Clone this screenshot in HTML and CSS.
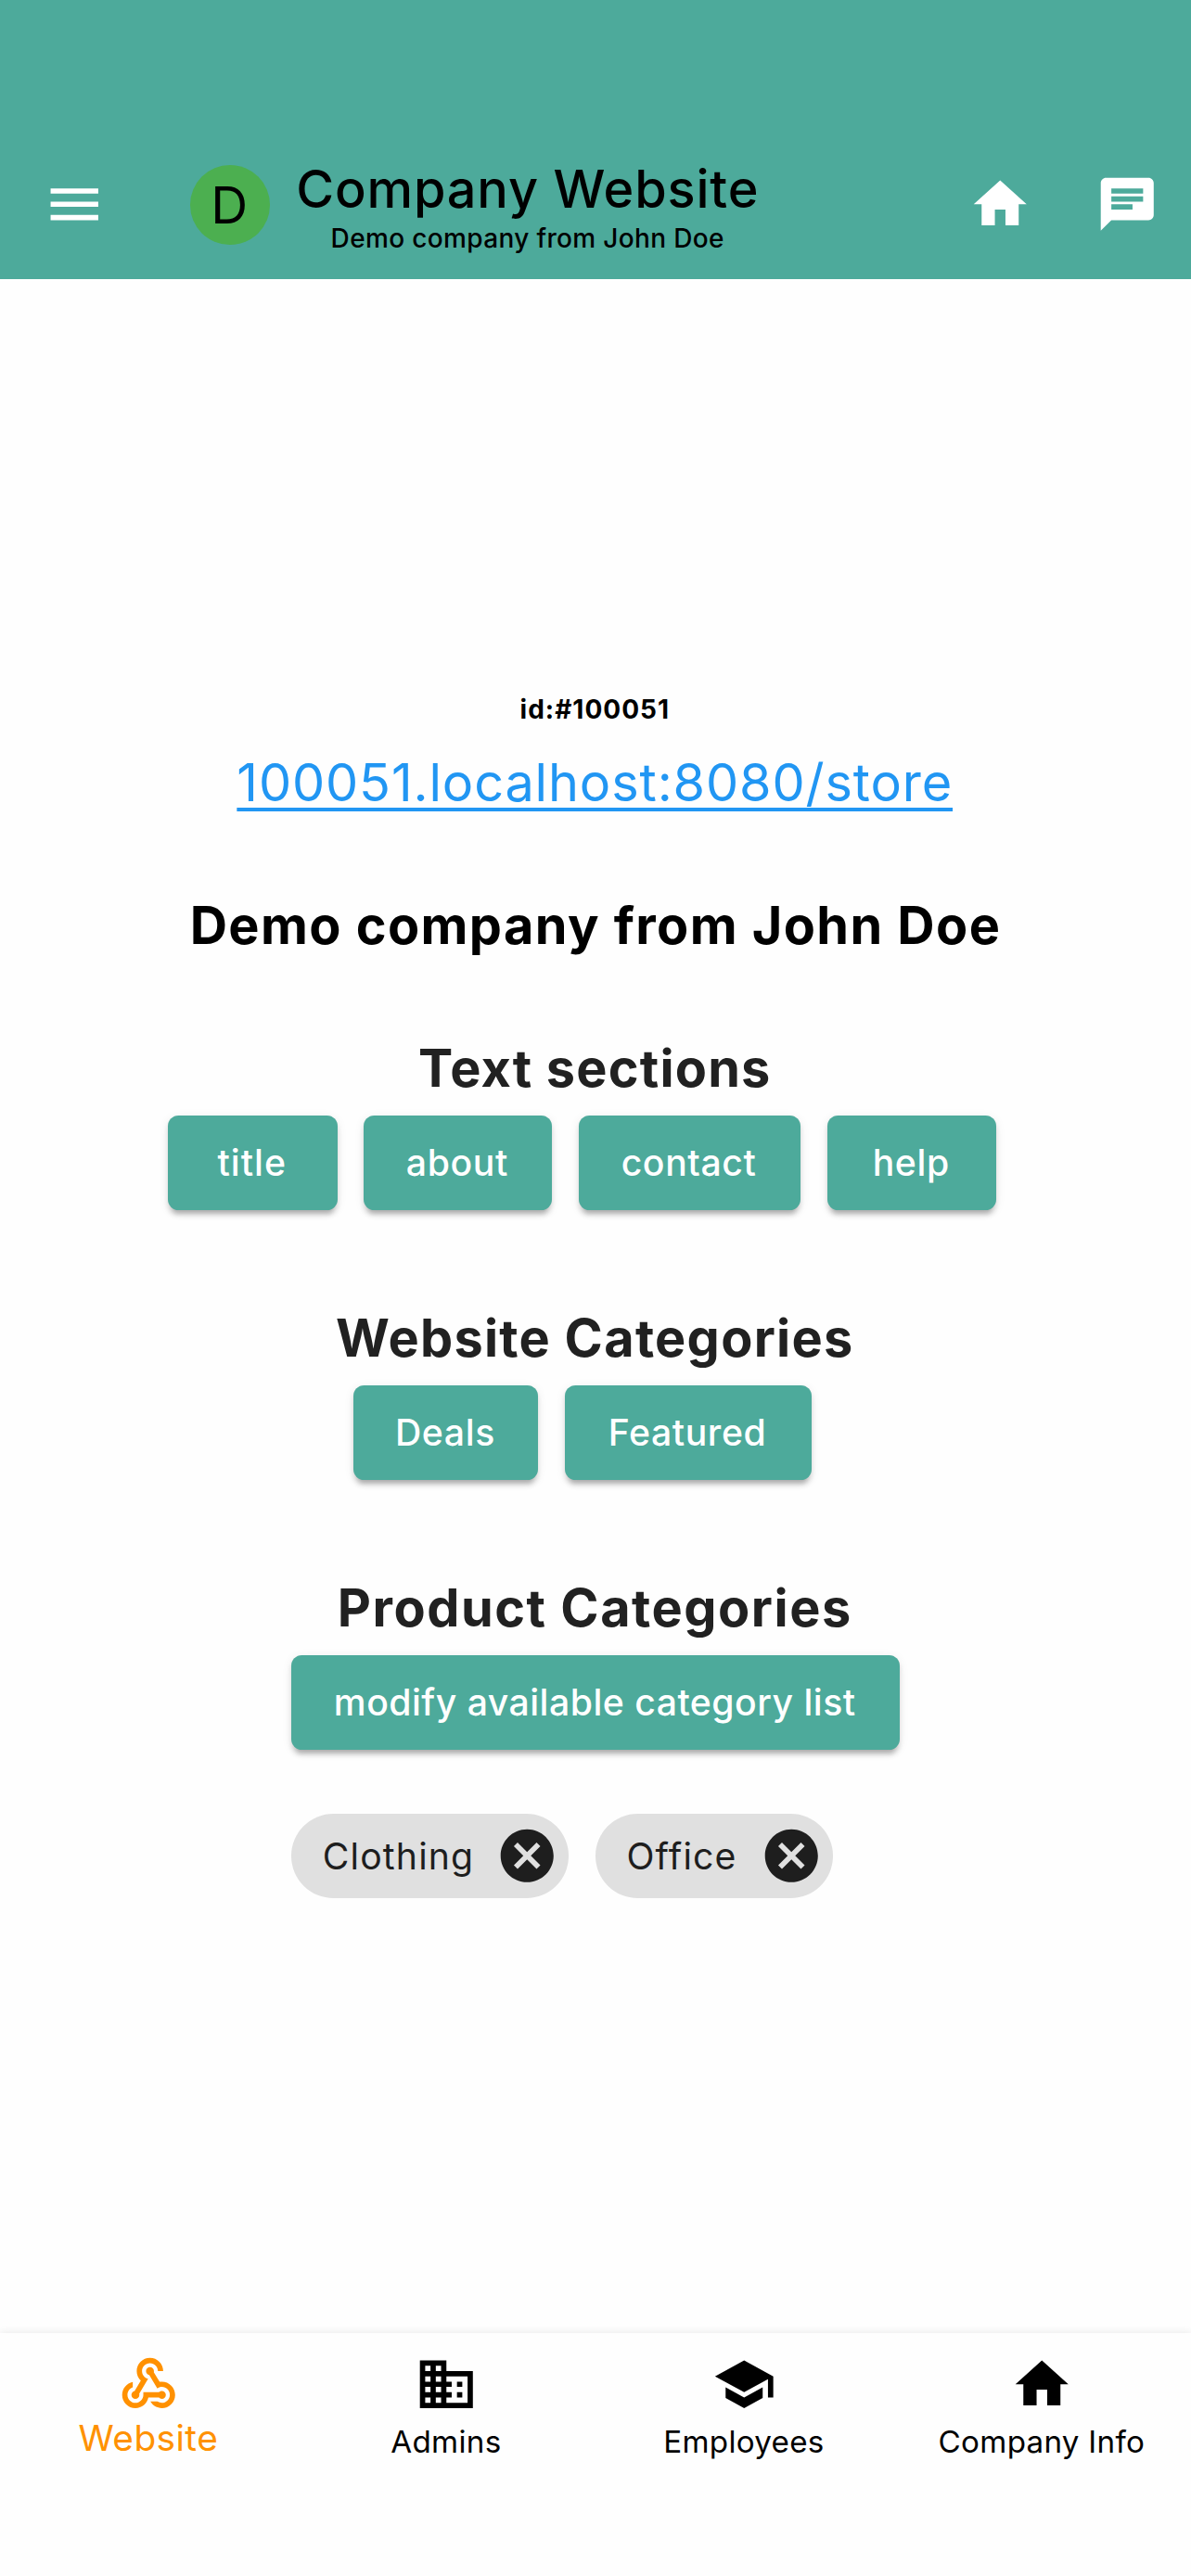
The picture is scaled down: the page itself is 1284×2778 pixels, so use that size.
FILE: index.html
```
<!DOCTYPE html>
<html lang="en">
<head>
<meta charset="utf-8">
<title>Company Website</title>
<link rel="stylesheet" href="styles.css">
</head>
<body>
<div class="app">
  <header class="topbar">
    <svg class="icon icon-menu" viewBox="0 0 24 24"><path d="M3 18h18v-2H3v2zm0-5h18v-2H3v2zm0-7v2h18V6H3z"/></svg>
    <div class="avatar">D</div>
    <div class="heading">
      <h1 class="title">Company Website</h1>
      <p class="subtitle">Demo company from John Doe</p>
    </div>
    <svg class="icon icon-home" viewBox="0 0 24 24"><path d="M10 20v-6h4v6h5v-8h3L12 3 2 12h3v8z"/></svg>
    <svg class="icon icon-chat" viewBox="0 0 24 24"><path d="M20 2H4c-1.1 0-1.99.9-1.99 2L2 22l4-4h14c1.1 0 2-.9 2-2V4c0-1.1-.9-2-2-2zM6 9h12v2H6V9zm8 5H6v-2h8v2zm4-6H6V6h12v2z"/></svg>
  </header>

  <main class="content">
    <p class="company-id">id:#100051</p>
    <a class="store-link">100051.localhost:8080/store</a>
    <h2 class="company-name">Demo company from John Doe</h2>

    <section class="section">
      <h3 class="section-title">Text sections</h3>
      <div class="buttons">
        <button class="btn btn-title">title</button>
        <button class="btn btn-about">about</button>
        <button class="btn btn-contact">contact</button>
        <button class="btn btn-help">help</button>
      </div>
    </section>

    <section class="section">
      <h3 class="section-title section-title-website">Website Categories</h3>
      <div class="buttons">
        <button class="btn btn-deals">Deals</button>
        <button class="btn btn-featured">Featured</button>
      </div>
    </section>

    <section class="section">
      <h3 class="section-title section-title-product">Product Categories</h3>
      <button class="btn btn-modify">modify available category list</button>
      <div class="chips">
        <div class="chip chip-clothing"><span>Clothing</span><svg class="icon" viewBox="0 0 24 24"><path d="M12 2C6.47 2 2 6.47 2 12s4.47 10 10 10 10-4.47 10-10S17.53 2 12 2zm5 13.59L15.59 17 12 13.41 8.41 17 7 15.59 10.59 12 7 8.41 8.41 7 12 10.59 15.59 7 17 8.41 13.41 12 17 15.59z"/></svg></div>
        <div class="chip chip-office"><span>Office</span><svg class="icon" viewBox="0 0 24 24"><path d="M12 2C6.47 2 2 6.47 2 12s4.47 10 10 10 10-4.47 10-10S17.53 2 12 2zm5 13.59L15.59 17 12 13.41 8.41 17 7 15.59 10.59 12 7 8.41 8.41 7 12 10.59 15.59 7 17 8.41 13.41 12 17 15.59z"/></svg></div>
      </div>
    </section>
  </main>

  <nav class="tabs">
    <div class="tab tab-active">
      <svg class="icon" viewBox="0 0 24 24"><path d="M10 15h5.88c.27-.31.67-.5 1.12-.5.83 0 1.5.67 1.5 1.5s-.67 1.5-1.5 1.5c-.44 0-.84-.19-1.12-.5H11.9c-.46 2.28-2.48 4-4.9 4-2.76 0-5-2.24-5-5 0-2.42 1.72-4.44 4-4.9v2.07C4.84 13.58 4 14.7 4 16c0 1.65 1.35 3 3 3s3-1.35 3-3v-1zm2.5-11c1.65 0 3 1.35 3 3h2c0-2.76-2.24-5-5-5s-5 2.24-5 5c0 1.43.6 2.71 1.55 3.62l-2.35 3.9c-.68.14-1.2.75-1.2 1.48 0 .83.67 1.5 1.5 1.5s1.5-.67 1.5-1.5c0-.16-.02-.31-.07-.45l3.38-5.63C10.49 9.61 9.5 8.42 9.5 7c0-1.65 1.35-3 3-3zm4.5 9c-.64 0-1.23.2-1.72.54l-3.05-5.07C11.53 8.35 11 7.74 11 7c0-.83.67-1.5 1.5-1.5S14 6.17 14 7c0 .15-.02.29-.06.43l2.19 3.65c.28-.05.57-.08.87-.08 2.76 0 5 2.24 5 5s-2.24 5-5 5c-1.85 0-3.47-1.01-4.33-2.5h2.67c.48.32 1.05.5 1.66.5 1.65 0 3-1.35 3-3s-1.35-3-3-3z"/></svg>
      <span>Website</span>
    </div>
    <div class="tab">
      <svg class="icon" viewBox="0 0 24 24"><path d="M12 7V3H2v18h20V7H12zM6 19H4v-2h2v2zm0-4H4v-2h2v2zm0-4H4V9h2v2zm0-4H4V5h2v2zm4 12H8v-2h2v2zm0-4H8v-2h2v2zm0-4H8V9h2v2zm0-4H8V5h2v2zm10 12h-8v-2h2v-2h-2v-2h2v-2h-2V9h8v10zm-2-8h-2v2h2v-2zm0 4h-2v2h2v-2z"/></svg>
      <span>Admins</span>
    </div>
    <div class="tab">
      <svg class="icon" viewBox="0 0 24 24"><path d="M5 13.18v4L12 21l7-3.82v-4L12 17l-7-3.82zM12 3L1 9l11 6 9-4.91V17h2V9L12 3z"/></svg>
      <span>Employees</span>
    </div>
    <div class="tab">
      <svg class="icon" viewBox="0 0 24 24"><path d="M10 20v-6h4v6h5v-8h3L12 3 2 12h3v8z"/></svg>
      <span>Company Info</span>
    </div>
  </nav>
</div>
</body>
</html>
```
FILE: styles.css
```
* { box-sizing: border-box; margin: 0; padding: 0; }

body {
  font-family: Inter, "Liberation Sans", sans-serif;
  background: #fefefe;
  color: #000;
}

.app {
  display: flex;
  flex-direction: column;
  width: 1284px;
  height: 2778px;
  overflow: hidden;
}

.icon { width: 68.5px; height: 68.5px; flex: none; fill: currentColor; display: block; }

/* Top bar */
.topbar {
  display: flex;
  align-items: flex-start;
  flex: none;
  height: 300.5px;
  padding: 141px 34.3px 0 45.8px;
  background: #4daa9b;
}
.topbar .icon { margin-top: 45.2px; color: #fff; }
.avatar {
  width: 85.6px;
  height: 85.6px;
  margin: 37px 0 0 91.2px;
  padding-right: 2px;
  border-radius: 50%;
  background: #4caf50;
  font-size: 55.3px;
  line-height: 85.6px;
  text-align: center;
}
.heading { width: 500px; margin: 29px 0 0 27.7px; text-align: center; }
.title { font-size: 55.8px; font-weight: 500; line-height: 67px; letter-spacing: .85px; }
.subtitle { margin-top: 2.5px; font-size: 28px; font-weight: 500; line-height: 34px; letter-spacing: .35px; }
.icon-home { margin-left: auto; }
.icon-chat { margin-left: 68.6px; }

/* Content */
.content {
  display: flex;
  flex-direction: column;
  align-items: center;
  flex: 1;
  padding-top: 447px;
  white-space: nowrap;
}
.company-id { margin-right: 1.4px; font-size: 28px; font-weight: 700; line-height: 34px; letter-spacing: 1px; }
.store-link {
  margin: 28.5px 1.6px 0 0;
  font-size: 55.8px;
  line-height: 67px;
  letter-spacing: .87px;
  color: #2196f3;
  text-decoration: underline;
  text-decoration-thickness: 3.6px;
  text-decoration-skip-ink: none;
  text-underline-offset: 7px;
}
.company-name { margin-top: 87px; font-size: 55.8px; font-weight: 700; line-height: 67px; letter-spacing: 1.42px; }

.section { display: flex; flex-direction: column; align-items: center; }
.section-title {
  margin: 87px 1.4px 17.8px 0;
  font-size: 55.8px;
  font-weight: 700;
  line-height: 67px;
  letter-spacing: 1.2px;
  color: #212121;
}
.section + .section .section-title { margin-top: 103.5px; }
.section-title-website { letter-spacing: 1.3px; }
.section-title-product { letter-spacing: 1.55px; }

.buttons { display: flex; }
.buttons .btn { margin-right: 28.5px; }
.btn {
  height: 102.7px;
  padding: 0 1.6px 0 0;
  border: 0;
  border-radius: 11.4px;
  background: #4daa9b;
  box-shadow: 0 8.6px 4px -5.7px rgba(0, 0, 0, .18), 0 5.7px 5.7px rgba(0, 0, 0, .12), 0 2.9px 11px rgba(0, 0, 0, .08);
  color: #fff;
  font: 500 39.2px/101.7px Inter, "Liberation Sans", sans-serif;
  letter-spacing: .6px;
}
.btn-title { width: 182.6px; letter-spacing: 1px; }
.btn-about { width: 202.7px; }
.btn-contact { width: 239.7px; }
.btn-help { width: 182.6px; }
.btn-deals { width: 199.6px; }
.btn-featured { width: 265.6px; }
.btn-modify { width: 656px; letter-spacing: .48px; }

.chips { display: flex; gap: 28.5px; width: 656px; margin-top: 68.6px; }
.chip {
  display: flex;
  align-items: center;
  justify-content: space-between;
  height: 91.3px;
  padding: 0 11.2px 1px 33.8px;
  border-radius: 45.7px;
  background: #e0e0e0;
  color: #1e1e1e;
  font-size: 39.2px;
  letter-spacing: 1.15px;
}
.chip-clothing { width: 299.2px; }
.chip-office { width: 256.5px; }

/* Bottom navigation */
.tabs {
  display: flex;
  flex: none;
  height: 262.5px;
  padding-top: 21.5px;
  background: #fefefe;
  box-shadow: 0 0 9px rgba(0, 0, 0, .1);
}
.tab { display: flex; flex: 1; flex-direction: column; align-items: center; }
.tab span { margin: 7.1px 1.2px 0 0; font-size: 33.2px; line-height: 40px; letter-spacing: .27px; }
.tab-active { color: #ff9100; }
.tab-active span { margin-top: -.9px; font-size: 38.8px; line-height: 48px; letter-spacing: .45px; }
```
